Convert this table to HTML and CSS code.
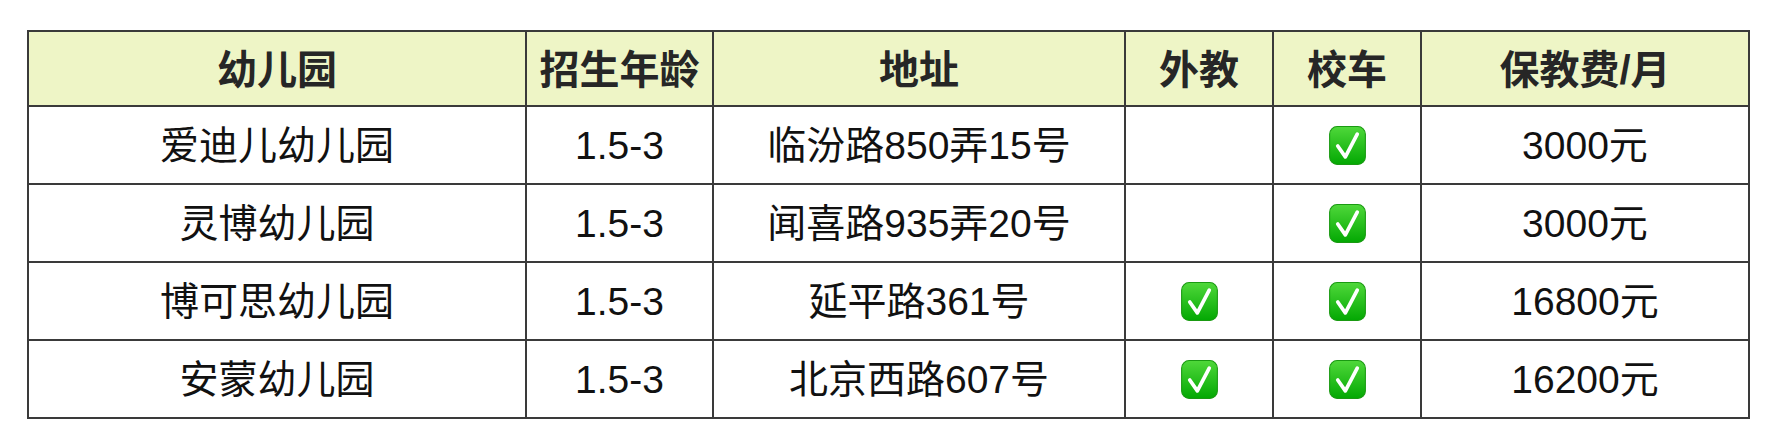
FILE: index.html
```html
<!DOCTYPE html>
<html lang="zh">
<head>
<meta charset="utf-8">
<title>幼儿园</title>
<link rel="stylesheet" href="styles.css">
</head>
<body>
<svg width="0" height="0" class="defs">
  <defs>
    <linearGradient id="g" x1="0" y1="0" x2="0" y2="1">
      <stop offset="0" stop-color="#4fd83a"/>
      <stop offset="1" stop-color="#03a803"/>
    </linearGradient>
    <symbol id="chk" viewBox="0 0 34 36">
      <rect x="0.5" y="0.5" width="33" height="35" rx="7" fill="url(#g)" stroke="#1a9a12" stroke-width="1"/>
      <path d="M8 18.5 L15 28.5 L26 7.5" fill="none" stroke="#fff" stroke-width="3.4" stroke-linecap="round" stroke-linejoin="round"/>
    </symbol>
  </defs>
</svg>
<div class="wrap">
<table class="tbl">
  <colgroup>
    <col class="c1"><col class="c2"><col class="c3"><col class="c4"><col class="c5"><col class="c6">
  </colgroup>
  <thead>
    <tr><th>幼儿园</th><th>招生年龄</th><th>地址</th><th>外教</th><th>校车</th><th>保教费/月</th></tr>
  </thead>
  <tbody>
    <tr><td>爱迪儿幼儿园</td><td>1.5-3</td><td>临汾路850弄15号</td><td></td><td><svg class="ck"><use href="#chk"/></svg></td><td>3000元</td></tr>
    <tr><td>灵博幼儿园</td><td>1.5-3</td><td>闻喜路935弄20号</td><td></td><td><svg class="ck"><use href="#chk"/></svg></td><td>3000元</td></tr>
    <tr><td>博可思幼儿园</td><td>1.5-3</td><td>延平路361号</td><td><svg class="ck"><use href="#chk"/></svg></td><td><svg class="ck"><use href="#chk"/></svg></td><td>16800元</td></tr>
    <tr><td>安蒙幼儿园</td><td>1.5-3</td><td>北京西路607号</td><td><svg class="ck"><use href="#chk"/></svg></td><td><svg class="ck"><use href="#chk"/></svg></td><td>16200元</td></tr>
  </tbody>
</table>
</div>
</body>
</html>
```
FILE: styles.css
```css
html, body {
  margin: 0;
  padding: 0;
  background: #ffffff;
}
.defs {
  position: absolute;
  width: 0;
  height: 0;
}
.wrap {
  padding: 30px 0 0 27px;
}
.tbl {
  border-collapse: collapse;
  width: 1721px;
  table-layout: fixed;
  font-family: "Liberation Sans", "Noto Sans CJK SC", sans-serif;
  font-size: 39px;
  color: #111;
  border: 2px solid #3a3a3a;
}
.c1 { width: 498px; }
.c2 { width: 187px; }
.c3 { width: 412px; }
.c4 { width: 148px; }
.c5 { width: 148px; }
.c6 { width: 328px; }
.tbl th, .tbl td {
  border: 2px solid #3a3a3a;
  text-align: center;
  vertical-align: middle;
  padding: 0;
  line-height: 1;
}
.tbl th {
  background: #eef5c6;
  font-weight: bold;
  color: #262626;
  height: 71px;
  font-size: 40px;
  padding-top: 2px;
}
.tbl td {
  height: 76px;
}
.ck {
  width: 37px;
  height: 39px;
  display: block;
  margin: 0 auto;
}
```
